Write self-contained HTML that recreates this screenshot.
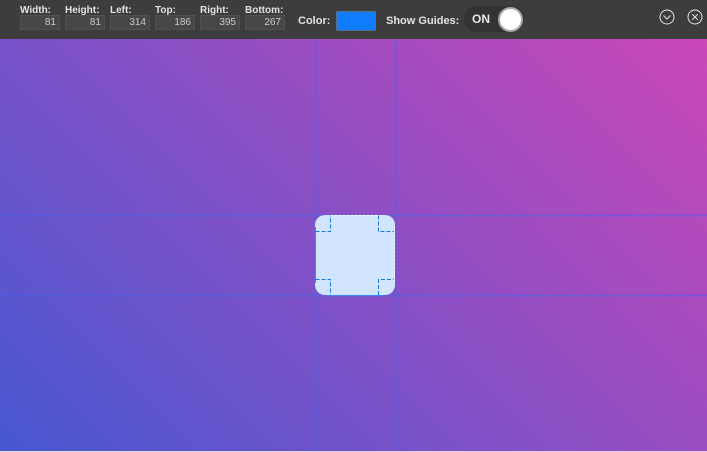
<!DOCTYPE html>
<html>
<head>
<meta charset="utf-8">
<style>
html,body{margin:0;padding:0;width:707px;height:452px;overflow:hidden;background:#e4d0f0}
body{position:relative;font-family:"Liberation Sans",sans-serif}
#bg{position:absolute;left:0;top:39px;width:707px;height:412px;background:linear-gradient(45deg,#4758d1 0%,#ca47b8 100%)}
#strip{position:absolute;left:0;top:451px;width:707px;height:1px;background:linear-gradient(to right,#d6dcf6,#ecc8ee)}
#bar{position:absolute;left:0;top:0;width:707px;height:39px;background:#3d3d3d}
.l{position:absolute;top:5px;font-size:10px;font-weight:bold;color:#e2e2e2;line-height:12px}
.i{position:absolute;top:15px;width:38px;height:13px;background:#474747;border:1px solid #505050;color:#cacaca;font-size:10px;line-height:14px;text-align:right}
.i span{display:block;padding-right:3px}
.m{position:absolute;top:14px;font-size:11px;font-weight:bold;color:#e2e2e2;line-height:14px}
#sw{position:absolute;left:336px;top:11px;width:38px;height:18px;background:#0f7bff;border:1px solid #56708f;border-radius:2px}
#tg{position:absolute;left:464px;top:6px;width:60px;height:26px;background:#333;border-radius:13px}
#tg b{position:absolute;left:8px;top:6px;font-size:12px;line-height:14px;color:#e8e8e8}
#tg i{position:absolute;left:34px;top:1px;width:21px;height:21px;border-radius:50%;background:#fff;border:2px solid #a8a8a8}
.v{position:absolute;top:39px;width:3px;height:412px;background:linear-gradient(to right,rgba(72,100,235,.1),rgba(72,100,235,.55),rgba(72,100,235,.1))}
.h{position:absolute;left:0;width:707px;height:3px;background:linear-gradient(to bottom,rgba(72,100,235,.1),rgba(72,100,235,.55),rgba(72,100,235,.1))}
#box{position:absolute;left:315px;top:215px;width:80px;height:80px;background:#d1e5ff;border-radius:10px;overflow:hidden}
#dash{position:absolute;left:315px;top:215px}
</style>
</head>
<body>
<div id="bg"></div>
<div id="strip"></div>
<div class="v" style="left:314px"></div>
<div class="v" style="left:394px"></div>
<div class="h" style="top:214px"></div>
<div class="h" style="top:294px"></div>
<div id="box"></div>
<svg id="dash" width="81" height="81" viewBox="0 0 81 81">
<g fill="none" stroke="#1878e0" stroke-width="1" stroke-dasharray="4 2" shape-rendering="crispEdges">
<path d="M0.5 16.5H15.5V0.5"/>
<path d="M63.5 0.5V16.5H80"/>
<path d="M0.5 64.5H15.5V80"/>
<path d="M63.5 80V64.5H80"/>
</g>
<g fill="none" stroke="#fff" stroke-width="1" stroke-dasharray="2 2" shape-rendering="crispEdges">
<path d="M16 0.5H63"/>
<path d="M79.5 12V68"/>
</g>
<path d="M0.5 12V68M12 80.5H68" stroke="#3f86f0" stroke-width="1" fill="none" shape-rendering="crispEdges"/>
</svg>
<div id="bar">
<div class="l" style="left:20px">Width:</div>
<div class="i" style="left:20px"><span>81</span></div>
<div class="l" style="left:65px">Height:</div>
<div class="i" style="left:65px"><span>81</span></div>
<div class="l" style="left:110px">Left:</div>
<div class="i" style="left:110px"><span>314</span></div>
<div class="l" style="left:155px">Top:</div>
<div class="i" style="left:155px"><span>186</span></div>
<div class="l" style="left:200px">Right:</div>
<div class="i" style="left:200px"><span>395</span></div>
<div class="l" style="left:245px">Bottom:</div>
<div class="i" style="left:245px"><span>267</span></div>
<div class="m" style="left:298px">Color:</div>
<div id="sw"></div>
<div class="m" style="left:386px">Show Guides:</div>
<div id="tg"><b>ON</b><i></i></div>
<svg style="position:absolute;left:655px;top:5px" width="52" height="24" viewBox="0 0 52 24">
<g fill="none" stroke="#e6e6e6" stroke-width="1">
<circle cx="12" cy="12" r="7"/>
<path d="M8.5 10.5L12 14L15.5 10.5"/>
<circle cx="40" cy="12" r="7"/>
<path d="M37.2 9.2L42.8 14.8M42.8 9.2L37.2 14.8"/>
</g>
</svg>
</div>
</body>
</html>
